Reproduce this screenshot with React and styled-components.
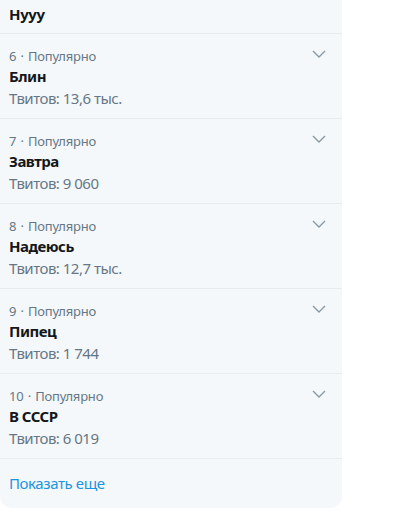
import React from "react";
import styled, { createGlobalStyle } from "styled-components";

const Global = createGlobalStyle`
    body {
        margin: 0;
        background: #fff;
        font-family: "Noto Sans", "Open Sans", sans-serif;
    }
`;

const Panel = styled.div`
    width: 342px;
    background: #f5f8fa;
    border-bottom-right-radius: 12px;
    border-bottom-left-radius: 12px;
`;

const TopItem = styled.div`
    height: 34px;
    padding: 2px 10px 0 9px;
    box-sizing: border-box;
    border-bottom: 1px solid #e6ecf0;
    font-size: 15px;
    font-weight: 700;
    line-height: 24px;
    letter-spacing: -0.4px;
    color: #14171a;
`;

const Row = styled.div`
    position: relative;
    padding: 12px 10px 9px 9px;
    border-bottom: 1px solid #e6ecf0;
`;

const Meta = styled.div`
    font-size: 13px;
    line-height: 20px;
    letter-spacing: -0.2px;
    color: #657786;
`;

const Dot = styled.span`
    margin: 0 1px;
`;

const Title = styled.div`
    font-size: 15px;
    font-weight: 700;
    line-height: 21px;
    letter-spacing: -0.5px;
    color: #14171a;
`;

const Count = styled.div`
    font-size: 15px;
    line-height: 22px;
    letter-spacing: -0.5px;
    color: #657786;
`;

const Caret = styled.svg`
    position: absolute;
    top: 14px;
    right: 14px;
`;

const ShowMore = styled.div`
    padding: 14px 10px 15px 9px;
    font-size: 15px;
    line-height: 20px;
    letter-spacing: -0.4px;
    color: #1b95e0;
`;

const trends = [
    { n: 6, title: "Блин", count: "13,6 тыс." },
    { n: 7, title: "Завтра", count: "9 060" },
    { n: 8, title: "Надеюсь", count: "12,7 тыс." },
    { n: 9, title: "Пипец", count: "1 744" },
    { n: 10, title: "В СССР", count: "6 019" },
];

export default function App() {
    return (
        <>
            <Global />
            <Panel>
                <TopItem>Нууу</TopItem>
                {trends.map((t) => (
                    <Row key={t.n}>
                        <Meta>{t.n}<Dot> · </Dot>Популярно</Meta>
                        <Title>{t.title}</Title>
                        <Count>Твитов: {t.count}</Count>
                        <Caret width="18" height="12" viewBox="0 0 18 12">
                            <path d="M3 3 L9 9 L15 3" fill="none" stroke="#8899a6" strokeWidth="1.4" />
                        </Caret>
                    </Row>
                ))}
                <ShowMore>Показать еще</ShowMore>
            </Panel>
        </>
    );
}
